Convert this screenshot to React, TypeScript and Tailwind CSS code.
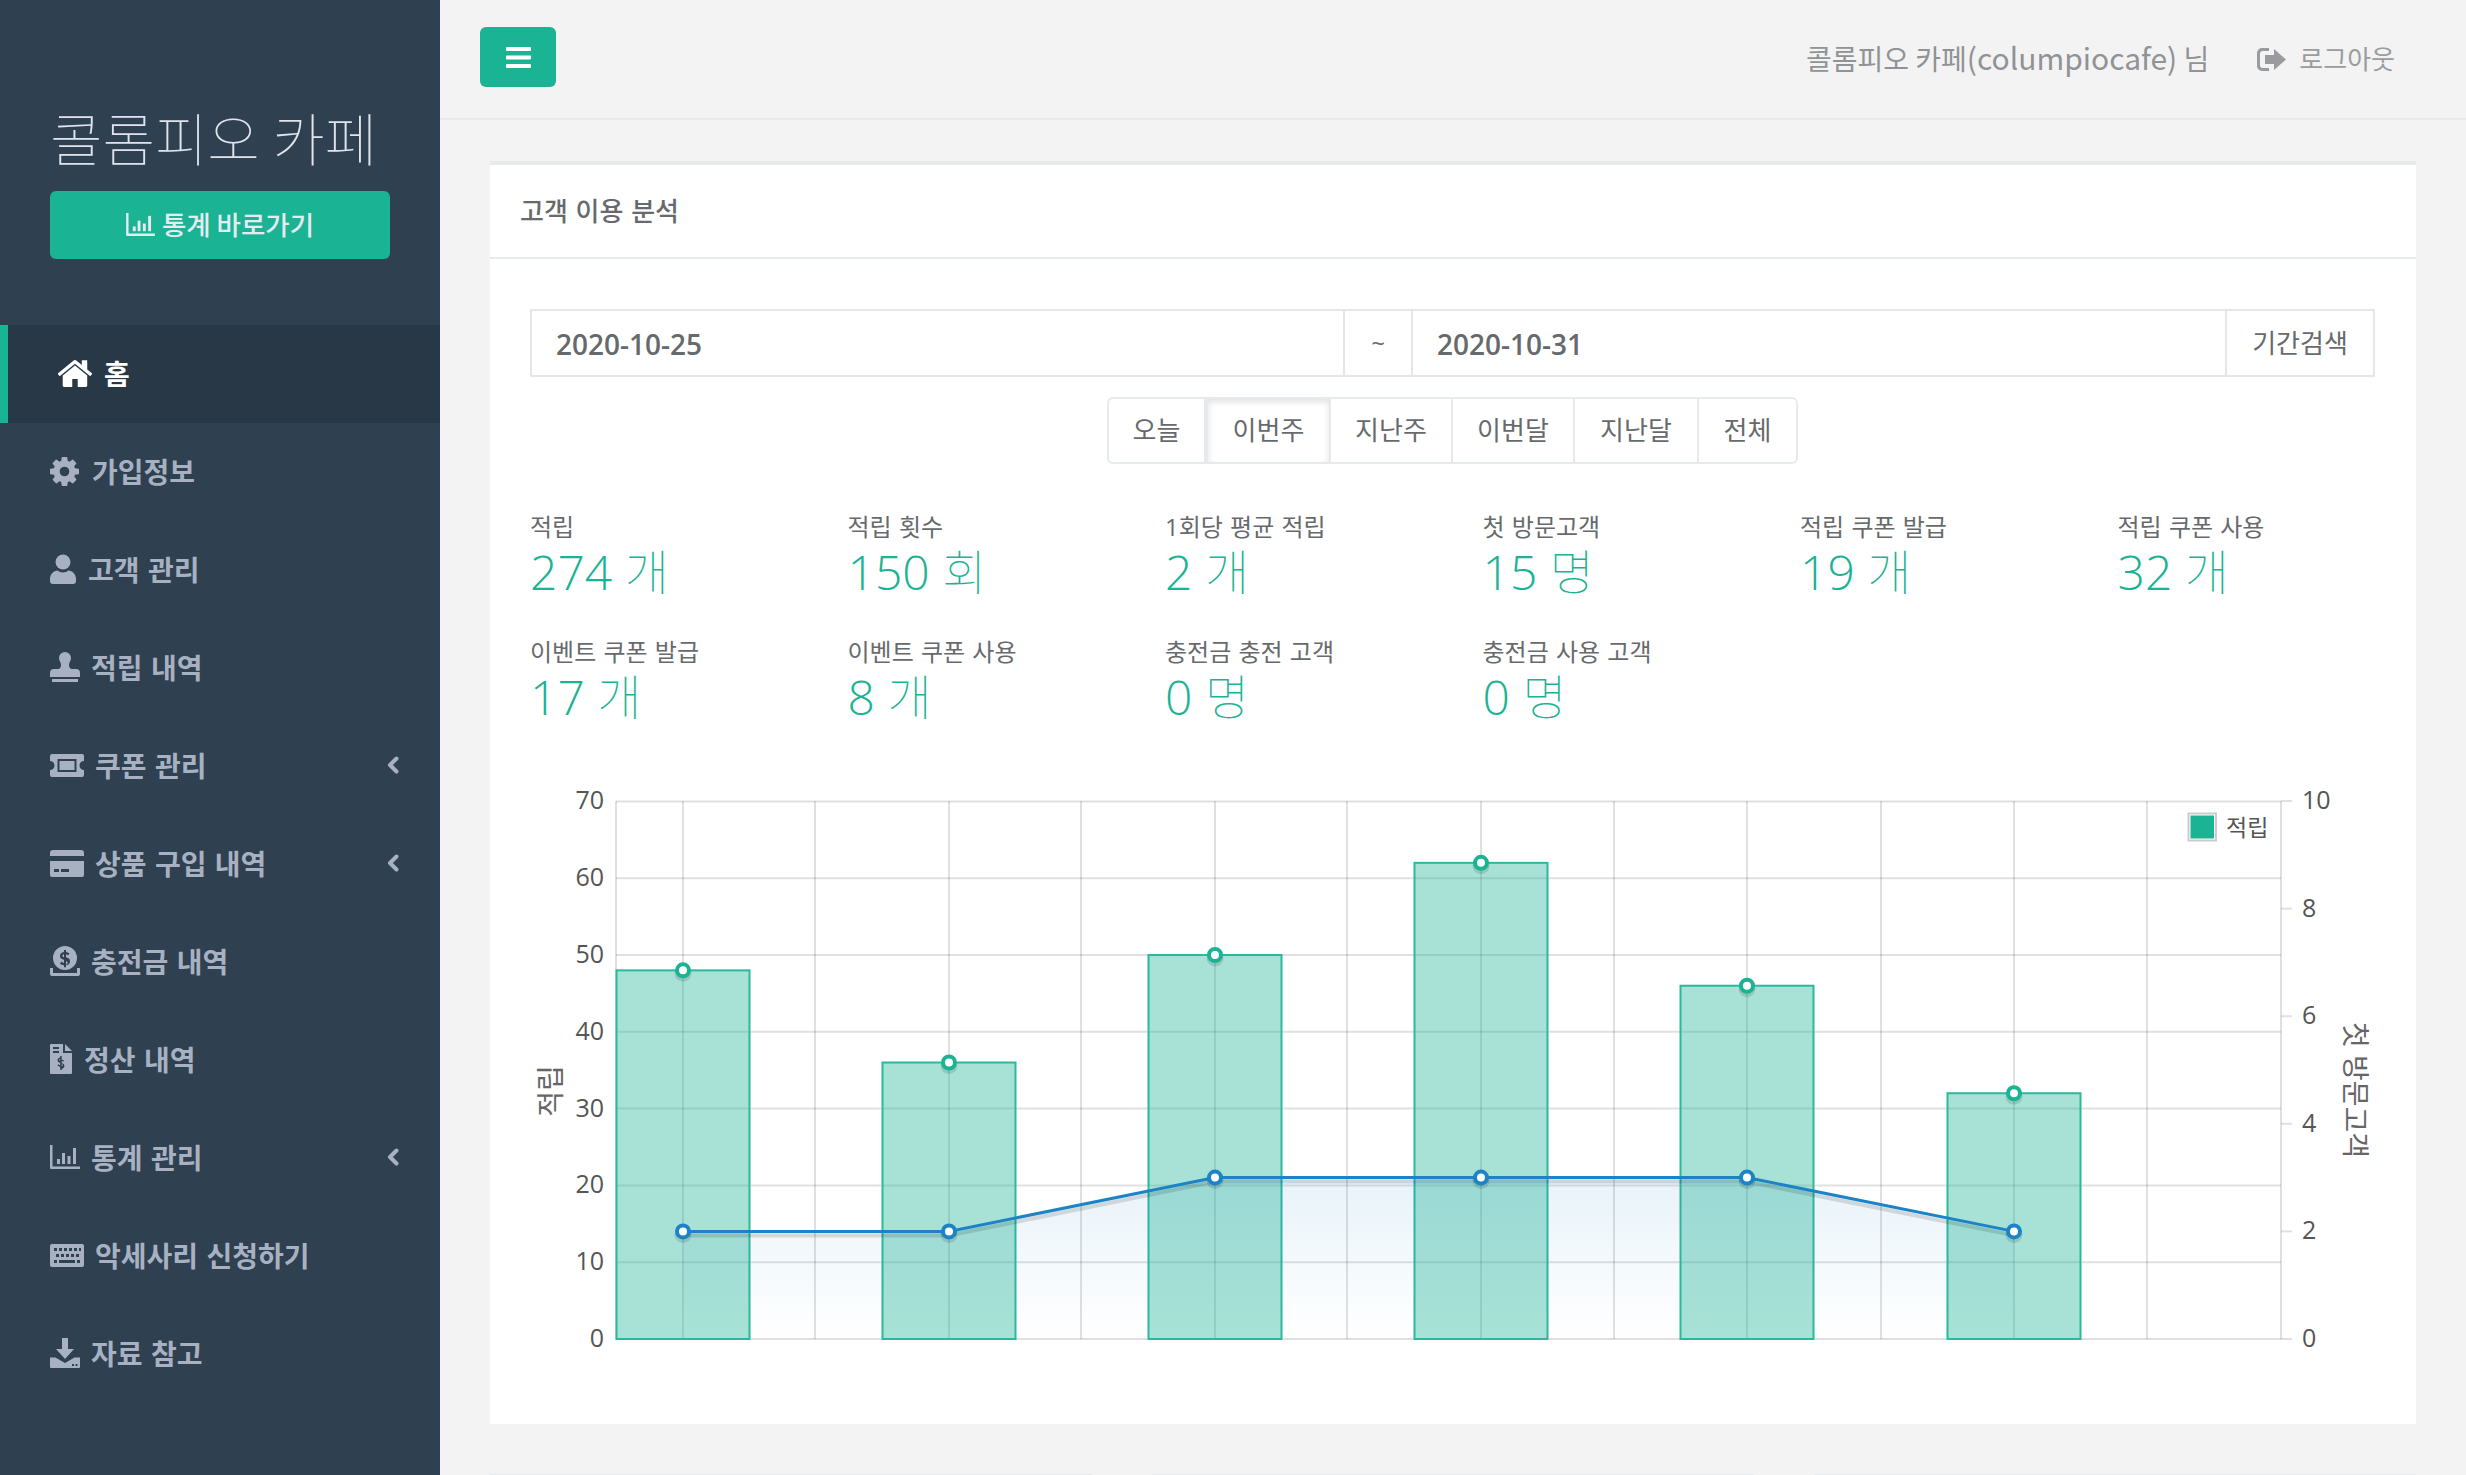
import type { ReactNode } from 'react';

const HomeIcon = () => (
  <svg viewBox="97 200 1600 1336" className="w-[34px] h-[28px]" fill="currentColor" preserveAspectRatio="none">
    <path d="M1472 992v480q0 26-19 45t-45 19h-384v-384h-256v384h-384q-26 0-45-19t-19-45v-480q0-1 .5-3t.5-3l575-474 575 474q1 2 1 6zm223-69l-62 74q-8 9-21 11h-3q-13 0-21-7l-692-577-692 577q-12 8-24 7-13-2-21-11l-62-74q-8-10-7-23.5t11-21.5l719-599q32-26 76-26t76 26l244 204v-195q0-14 9-23t23-9h192q14 0 23 9t9 23v408l219 182q10 8 11 21.5t-7 23.5z" />
  </svg>
);

const CogIcon = () => (
  <svg viewBox="128 128 1536 1536" className="w-[29px] h-[29px]" fill="currentColor">
    <path d="M1152 896q0-106-75-181t-181-75-181 75-75 181 75 181 181 75 181-75 75-181zm512-109v222q0 12-8 23t-20 13l-185 28q-19 54-39 91 35 50 107 138 10 12 10 25t-9 23q-27 37-99 108t-94 71q-12 0-26-9l-138-108q-44 23-91 38-16 136-29 186-7 28-36 28h-222q-14 0-24.5-8.5t-11.5-21.5l-28-184q-49-16-90-37l-141 107q-10 9-25 9-14 0-25-11-126-114-165-168-7-10-7-23 0-12 8-23 15-21 51-66.5t54-70.5q-27-50-41-99l-183-27q-13-2-21-12.5t-8-23.5v-222q0-12 8-23t19-13l186-28q14-46 39-92-40-57-107-138-10-12-10-24 0-10 9-23 26-36 98.5-107.5t94.5-71.5q13 0 26 10l138 107q44-23 91-38 16-136 29-186 7-28 36-28h222q14 0 24.5 8.5t11.5 21.5l28 184q49 16 90 37l142-107q9-9 24-9 13 0 25 10 129 119 165 170 7 8 7 22 0 12-8 23-15 21-51 66.5t-54 70.5q26 50 41 98l183 28q13 2 21 12.5t8 23.5z" />
  </svg>
);

const UserIcon = () => (
  <svg viewBox="0 0 26 30" className="w-[26px] h-[30px]" fill="currentColor">
    <circle cx="13" cy="8" r="7.500" />
    <path d="M0 25c0-5 4-8.500 7.500-8.500 1.500 1.300 3.400 2 5.500 2s4-.7 5.500-2C22 16.500 26 20 26 25v2a3 3 0 0 1-3 3H3a3 3 0 0 1-3-3z" />
  </svg>
);

const StampIcon = () => (
  <svg viewBox="0 0 30 30" className="w-[30px] h-[30px]" fill="currentColor">
    <path d="M15 0a6 6 0 0 1 6 6c0 3-2 4-2 7 0 2 1 4 3 4h4a4 4 0 0 1 4 4v4H0v-4a4 4 0 0 1 4-4h4c2 0 3-2 3-4 0-3-2-4-2-7a6 6 0 0 1 6-6z" />
    <rect x="2" y="27" width="26" height="3" />
  </svg>
);

const TicketIcon = () => (
  <svg viewBox="0 0 34 23" className="w-[34px] h-[23px]" fill="currentColor">
    <path
      fillRule="evenodd"
      d="M2 0h30a2 2 0 0 1 2 2v5a4.5 4.5 0 0 0 0 9v5a2 2 0 0 1-2 2H2a2 2 0 0 1-2-2v-5a4.5 4.5 0 0 0 0-9V2a2 2 0 0 1 2-2zm5.5 5v13h19V5z"
    />
    <rect x="9.5" y="7" width="15" height="9" />
  </svg>
);

const CardIcon = () => (
  <svg viewBox="0 0 34 27" className="w-[34px] h-[27px]" fill="currentColor">
    <path
      fillRule="evenodd"
      d="M3 0h28a3 3 0 0 1 3 3v3H0V3a3 3 0 0 1 3-3zM0 11h34v14a2 2 0 0 1-2 2H2a2 2 0 0 1-2-2zm4 8v3h5v-3zm7 0v3h8v-3z"
    />
  </svg>
);

const MoneyIcon = () => (
  <svg viewBox="0 0 30 30" className="w-[30px] h-[30px]" fill="currentColor">
    <path
      fillRule="evenodd"
      d="M15 0a12 12 0 1 1 0 24 12 12 0 0 1 0-24zm-1 4v2c-2.500.4-4 1.900-4 3.900 0 2.300 1.800 3.200 4 3.800v3.300c-1-.2-1.900-.7-2.600-1.400l-1.400 1.900c1 1 2.400 1.600 4 1.800v2h2v-2c2.600-.4 4-2 4-4.100 0-2.400-1.800-3.300-4-3.900V8.200c.8.200 1.500.5 2.100 1l1.300-1.800c-.9-.8-2-1.200-3.400-1.400V4zm0 4.200v3c-1-.3-1.600-.7-1.600-1.500 0-.7.6-1.300 1.600-1.500zm2 7c1 .3 1.600.8 1.600 1.600 0 .8-.6 1.400-1.600 1.600z"
    />
    <path d="M0 22h3v5h24v-5h3v6a2 2 0 0 1-2 2H2a2 2 0 0 1-2-2z" />
  </svg>
);

const FileIcon = () => (
  <svg viewBox="0 0 22 30" className="w-[22px] h-[30px]" fill="currentColor">
    <path
      fillRule="evenodd"
      d="M1 0h12v9h9v20a1 1 0 0 1-1 1H1a1 1 0 0 1-1-1V1a1 1 0 0 1 1-1zm2 3v2h6V3zm0 4v2h6V7zm7.200 5v1.500c-1.700.3-2.700 1.300-2.700 2.700 0 1.600 1.200 2.200 2.700 2.600v2.400c-.7-.1-1.300-.5-1.800-1l-1 1.300c.7.7 1.700 1.100 2.800 1.200V26h1.500v-1.300c1.700-.3 2.700-1.400 2.700-2.800 0-1.700-1.200-2.300-2.700-2.700v-2.100c.5.100 1 .4 1.400.7l.9-1.300c-.6-.5-1.400-.8-2.300-1V12zm0 3.100v2c-.7-.2-1.100-.5-1.100-1 0-.5.400-.9 1.100-1zm1.500 5c.7.200 1.100.5 1.100 1.100 0 .5-.4.900-1.100 1.100z"
    />
    <path d="M15 0l7 7h-7z" />
  </svg>
);

const ChartIcon = ({ className }: { className: string }) => (
  <svg viewBox="0 0 30 24" className={className} fill="currentColor">
    <path d="M0 0h2.500v21.500H30V24H1a1 1 0 0 1-1-1z" />
    <rect x="7" y="14" width="3" height="5" />
    <rect x="12" y="8" width="3" height="11" />
    <rect x="17.500" y="11" width="3" height="8" />
    <rect x="23" y="3" width="3" height="16" />
  </svg>
);

const KeyboardIcon = () => (
  <svg viewBox="0 0 34 23" className="w-[34px] h-[23px]" fill="currentColor">
    <path
      fillRule="evenodd"
      d="M2 0h30a2 2 0 0 1 2 2v19a2 2 0 0 1-2 2H2a2 2 0 0 1-2-2V2a2 2 0 0 1 2-2zm2 4v3h3V4zm5 0v3h3V4zm5 0v3h3V4zm5 0v3h3V4zm5 0v3h3V4zm5 0v3h2V4zM6 10v3h3v-3zm5 0v3h3v-3zm5 0v3h3v-3zm5 0v3h3v-3zm5 0v3h3v-3zM4 16v3h3v-3zm5 0v3h16v-3zm18 0v3h3v-3z"
    />
  </svg>
);

const DownloadIcon = () => (
  <svg viewBox="0 0 30 30" className="w-[30px] h-[30px]" fill="currentColor">
    <path d="M12 0h6v11h6L15 21 6 11h6z" />
    <path
      fillRule="evenodd"
      d="M0 19.500h5.500L15 25l9.500-5.500H30V29a1 1 0 0 1-1 1H1a1 1 0 0 1-1-1zM22 26v2h2v-2zm3.500 0v2h2v-2z"
    />
  </svg>
);

const BarsIcon = () => (
  <svg viewBox="0 0 25 21" className="w-[25px] h-[21px]" fill="currentColor">
    <rect width="25" height="4" rx="1" />
    <rect y="8.500" width="25" height="4" rx="1" />
    <rect y="17" width="25" height="4" rx="1" />
  </svg>
);

const SignOutIcon = () => (
  <svg viewBox="0 0 29 23" className="w-[29px] h-[23px]" fill="currentColor">
    <path d="M5 0h7v3H6a3 3 0 0 0-3 3v11a3 3 0 0 0 3 3h6v3H5a5 5 0 0 1-5-5V5a5 5 0 0 1 5-5z" />
    <path d="M17 1l12 10.500L17 22v-6H8V7h9z" />
  </svg>
);

const ChevronIcon = () => (
  <svg viewBox="0 0 12 18" className="w-[12px] h-[18px]" fill="none" stroke="currentColor" strokeWidth="4" strokeLinecap="round" strokeLinejoin="round">
    <path d="M9.500 2.500L3 9l6.500 6.500" />
  </svg>
);

type NavItem = { label: string; icon: ReactNode; slot: string; arrow?: boolean };

const navItems: NavItem[] = [
  { label: '가입정보', icon: <CogIcon />, slot: 'w-[42px]' },
  { label: '고객 관리', icon: <UserIcon />, slot: 'w-[38px]' },
  { label: '적립 내역', icon: <StampIcon />, slot: 'w-[41px]' },
  { label: '쿠폰 관리', icon: <TicketIcon />, slot: 'w-[45px]', arrow: true },
  { label: '상품 구입 내역', icon: <CardIcon />, slot: 'w-[45px]', arrow: true },
  { label: '충전금 내역', icon: <MoneyIcon />, slot: 'w-[41px]' },
  { label: '정산 내역', icon: <FileIcon />, slot: 'w-[34px]' },
  { label: '통계 관리', icon: <ChartIcon className="w-[30px] h-[24px]" />, slot: 'w-[41px]', arrow: true },
  { label: '악세사리 신청하기', icon: <KeyboardIcon />, slot: 'w-[45px]' },
  { label: '자료 참고', icon: <DownloadIcon />, slot: 'w-[41px]' },
];

const periods = [
  { label: '오늘', width: 'w-[97px]' },
  { label: '이번주', width: 'w-[125px]', active: true },
  { label: '지난주', width: 'w-[122px]' },
  { label: '이번달', width: 'w-[122px]' },
  { label: '지난달', width: 'w-[124px]' },
  { label: '전체', width: 'w-[97px]' },
];

const stats = [
  ['적립', '274', '개'],
  ['적립 횟수', '150', '회'],
  ['1회당 평균 적립', '2', '개'],
  ['첫 방문고객', '15', '명'],
  ['적립 쿠폰 발급', '19', '개'],
  ['적립 쿠폰 사용', '32', '개'],
  ['이벤트 쿠폰 발급', '17', '개'],
  ['이벤트 쿠폰 사용', '8', '개'],
  ['충전금 충전 고객', '0', '명'],
  ['충전금 사용 고객', '0', '명'],
];

// chart geometry, in page coordinates (the svg viewBox starts at 530,770)
const plotLeft = 616;
const plotRight = 2281;
const plotBottom = 1339;
const centers = [683, 949, 1215, 1481, 1747, 2014];
const midLines = [815, 1081, 1347, 1614, 1881, 2147];
const bars = [48, 36, 50, 62, 46, 32];
const visits = [2, 2, 3, 3, 3, 2];
const leftY = (v: number) => plotBottom - v * 7.68;
const rightY = (v: number) => plotBottom - v * 53.8;
const linePoints = centers.map((x, i) => `${x},${rightY(visits[i])}`).join(' ');
const areaPoints = `${centers[0]},${plotBottom} ${linePoints} ${centers[5]},${plotBottom}`;

function Chart() {
  const grid = 'rgba(0,0,0,0.12)';
  return (
    <svg viewBox="530 770 1846 640" width="1846" height="640" className="block">
      <defs>
        <linearGradient id="visitFill" x1="0" y1="0" x2="0" y2="1">
          <stop offset="0" stopColor="#1c84c6" stopOpacity="0.1" />
          <stop offset="1" stopColor="#1c84c6" stopOpacity="0" />
        </linearGradient>
      </defs>

      {[0, 10, 20, 30, 40, 50, 60, 70].map((v) => (
        <g key={v}>
          <line x1={plotLeft} x2={plotRight} y1={leftY(v)} y2={leftY(v)} stroke={grid} strokeWidth="2" />
          <text x="604" y={leftY(v) + 8} textAnchor="end" fontSize="25" fill="#555">
            {v}
          </text>
        </g>
      ))}
      {[plotLeft, ...centers, ...midLines, plotRight].map((x) => (
        <line key={x} x1={x} x2={x} y1="801" y2={plotBottom} stroke={grid} strokeWidth="2" />
      ))}
      {[0, 2, 4, 6, 8, 10].map((v) => (
        <g key={v}>
          <line x1={plotRight} x2="2292" y1={rightY(v)} y2={rightY(v)} stroke={grid} strokeWidth="2" />
          <text x="2302" y={rightY(v) + 8} fontSize="25" fill="#555">
            {v}
          </text>
        </g>
      ))}

      {centers.map((x, i) => (
        <rect
          key={x}
          x={x - 66.5}
          y={leftY(bars[i])}
          width="133"
          height={plotBottom - leftY(bars[i])}
          fill="rgba(26,179,148,0.38)"
          stroke="#2bb99c"
          strokeWidth="2"
        />
      ))}

      <polygon points={areaPoints} fill="url(#visitFill)" />
      <polyline points={linePoints} transform="translate(0 4)" fill="none" stroke="rgba(0,0,0,0.12)" strokeWidth="4" />
      <polyline points={linePoints} fill="none" stroke="#1c84c6" strokeWidth="3" />

      {centers.map((x, i) => (
        <g key={x}>
          <circle cx={x} cy={leftY(bars[i]) + 3} r="8.500" fill="rgba(0,0,0,0.12)" />
          <circle cx={x} cy={leftY(bars[i])} r="6" fill="#fff" stroke="#1ab394" strokeWidth="4" />
          <circle cx={x} cy={rightY(visits[i]) + 3} r="8.500" fill="rgba(0,0,0,0.12)" />
          <circle cx={x} cy={rightY(visits[i])} r="6" fill="#fff" stroke="#1c84c6" strokeWidth="4" />
        </g>
      ))}

      <rect x="2189.500" y="814.500" width="25.500" height="25" fill="#1ab394" stroke="#fff" strokeWidth="2" />
      <rect x="2188.500" y="813.500" width="27.500" height="27" fill="none" stroke="#ccc" strokeWidth="2" />
      <text x="2226" y="836" fontSize="23" fill="#555">
        적립
      </text>

      <text transform="translate(561 1091) rotate(-90)" textAnchor="middle" fontSize="28" fill="#666">
        적립
      </text>
      <text transform="translate(2345 1090) rotate(90)" textAnchor="middle" fontSize="28" fill="#666">
        첫 방문고객
      </text>
    </svg>
  );
}

export default function App() {
  return (
    <div className="flex h-screen overflow-hidden bg-[#f3f3f4] text-[#676a6c] font-['Open_Sans','Noto_Sans_CJK_KR',sans-serif]">
      <aside className="w-[440px] shrink-0 bg-[#2f4050]">
        <div className="pt-[104px] pl-[50px] pr-[50px]">
          <h1 className="h-[64px] leading-[64px] whitespace-nowrap text-[57px] font-thin text-[#dfe4ed] font-['Noto_Sans_CJK_KR',sans-serif]">
            콜롬피오 카페
          </h1>
          <button className="mt-[23px] flex h-[68px] w-[340px] items-center justify-center gap-[7px] rounded-[6px] bg-[#1ab394] pb-[2px] text-[26.500px] font-medium text-[#e6ebf2] font-['Noto_Sans_CJK_KR',sans-serif]">
            <ChartIcon className="w-[29px] h-[23px]" />
            통계 바로가기
          </button>
        </div>

        <nav className="mt-[66px] text-[28px] font-semibold [word-spacing:2px] font-['Noto_Sans_CJK_KR',sans-serif]">
          <a className="flex h-[98px] items-center border-l-[8px] border-[#1ab394] bg-[#293846] pb-[2px] pl-[50px] text-white">
            <span className="flex w-[46px] items-center">
              <HomeIcon />
            </span>
            홈
          </a>
          {navItems.map((item) => (
            <a key={item.label} className="flex h-[98px] items-center pb-[2px] pl-[50px] pr-[41px] text-[#a7b1c2]">
              <span className={`flex items-center ${item.slot}`}>{item.icon}</span>
              {item.label}
              {item.arrow && (
                <span className="ml-auto">
                  <ChevronIcon />
                </span>
              )}
            </a>
          ))}
        </nav>
      </aside>

      <main className="min-w-0 flex-1">
        <header className="flex h-[120px] items-center border-b-2 border-[#e7eaec] pl-[40px] pr-[71px]">
          <button className="flex h-[60px] w-[76px] -translate-y-[2px] items-center justify-center rounded-[6px] bg-[#1ab394] text-white">
            <BarsIcon />
          </button>
          <span className="ml-auto pb-[4px] text-[28px] text-[#909395] font-['Noto_Sans_CJK_KR',sans-serif]">
            콜롬피오 카페<span className="text-[30px]">(columpiocafe)</span> 님
          </span>
          <span className="ml-[48px] flex items-center gap-[13px] text-[26px] text-[#999c9e]">
            <SignOutIcon />
            로그아웃
          </span>
        </header>

        <div className="px-[50px] pt-[41px]">
          <section className="border-t-4 border-[#e7eaec] bg-white">
            <div className="flex h-[94px] items-center border-b-2 border-[#e7eaec] pl-[30px] text-[26px] font-medium [word-spacing:1px]">
              고객 이용 분석
            </div>

            <div className="pl-[40px] pr-[41px] pt-[50px] pb-[14px]">
              <div className="flex h-[68px] border-2 border-[#e5e6e7] text-[28px] font-semibold">
                <div className="flex w-[811px] items-center pl-[24px] pt-[2px]">2020-10-25</div>
                <div className="flex w-[70px] items-center justify-center border-x-2 border-[#e5e6e7] text-[24px] font-normal">
                  ~
                </div>
                <div className="flex flex-1 items-center pl-[24px] pt-[2px]">2020-10-31</div>
                <div className="flex w-[148px] items-center justify-center border-l-2 border-[#e5e6e7] text-[26px] font-normal">
                  기간검색
                </div>
              </div>

              <div className="mt-[20px] flex justify-center">
                <div className="flex h-[67px] overflow-hidden rounded-[6px] border-2 border-[#e7eaec] text-[26px]">
                  {periods.map((p) => (
                    <div
                      key={p.label}
                      className={`flex items-center justify-center border-r-2 border-[#e7eaec] last:border-r-0 ${p.width} ${
                        p.active ? 'border-x-2 border-[#d2d2d2] shadow-[inset_0_3px_6px_rgba(0,0,0,0.12)]' : ''
                      }`}
                    >
                      {p.label}
                    </div>
                  ))}
                </div>
              </div>

              <div className="mt-[44px] grid w-[1905px] grid-cols-6 gap-y-[21px]">
                {stats.map(([label, value, unit]) => (
                  <div key={label} className="h-[104px]">
                    <div className="h-[38px] leading-[38px] text-[24px] [word-spacing:1px]">{label}</div>
                    <div className="h-[66px] leading-[46px] text-[48px] font-light text-[#1ab394]">
                      {value} <span className="font-thin font-['Noto_Sans_CJK_KR',sans-serif]">{unit}</span>
                    </div>
                  </div>
                ))}
              </div>

              <div className="mt-[33px]">
                <Chart />
              </div>
            </div>
          </section>

          <div className="mt-[50px] grid grid-cols-3 gap-[60px]">
            <section className="h-[40px] border-t-4 border-[#e7eaec] bg-white" />
            <section className="h-[40px] border-t-4 border-[#e7eaec] bg-white" />
            <section className="h-[40px] border-t-4 border-[#e7eaec] bg-white" />
          </div>
        </div>
      </main>
    </div>
  );
}
